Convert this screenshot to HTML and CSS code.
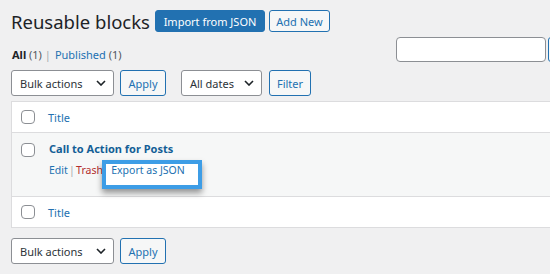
FILE: index.html
```html
<!DOCTYPE html>
<html lang="en">
<head>
<meta charset="UTF-8" />
<meta name="viewport" content="width=device-width, initial-scale=1" />
<title>Reusable blocks</title>
<link rel="stylesheet" href="styles.css">
</head>
<body>

<div class="wrap">
  <div class="page-head">
    <h1>Reusable blocks</h1>
    <a href="#" class="btn btn-primary">Import from JSON</a>
    <a href="#" class="btn btn-add">Add New</a>
  </div>

  <div class="filter-row">
    <ul class="subsubsub">
      <li><a href="#" class="current">All <span class="count">(1)</span></a> <span class="sep">|</span></li>
      <li><a href="#">Published <span class="count">(1)</span></a></li>
    </ul>
    <div class="search-box">
      <input type="search" class="search-input" aria-label="Search">
      <span class="search-btn"></span>
    </div>
  </div>

  <div class="tablenav">
    <div class="select select-bulk">Bulk actions
      <svg viewBox="0 0 10 6" width="10" height="6"><path d="M1 1l4 4 4-4" fill="none" stroke="#1d2327" stroke-width="1.6"/></svg>
    </div>
    <a href="#" class="btn btn-small">Apply</a>
    <div class="select select-dates">All dates
      <svg viewBox="0 0 10 6" width="10" height="6"><path d="M1 1l4 4 4-4" fill="none" stroke="#1d2327" stroke-width="1.6"/></svg>
    </div>
    <a href="#" class="btn btn-small">Filter</a>
  </div>

  <div class="list-table">
    <div class="row row-head">
      <span class="check"></span>
      <a href="#" class="col-title">Title</a>
    </div>
    <div class="row row-item">
      <span class="check"></span>
      <div class="item-body">
        <a href="#" class="item-title">Call to Action for Posts</a>
        <div class="row-actions">
          <a href="#">Edit</a> <span class="sep">|</span>
          <a href="#" class="trash">Trash</a> <span class="sep">|</span>
          <span class="export">
            <a href="#">Export as JSON</a>
            <span class="highlight"></span>
          </span>
        </div>
      </div>
    </div>
    <div class="row row-head">
      <span class="check"></span>
      <a href="#" class="col-title">Title</a>
    </div>
  </div>

  <div class="tablenav tablenav-bottom">
    <div class="select select-bulk">Bulk actions
      <svg viewBox="0 0 10 6" width="10" height="6"><path d="M1 1l4 4 4-4" fill="none" stroke="#1d2327" stroke-width="1.6"/></svg>
    </div>
    <a href="#" class="btn btn-small">Apply</a>
  </div>
</div>

</body>
</html>
```

FILE: styles.css
```css
/* Basic Reset */
* {
  margin: 0; padding: 0; box-sizing: border-box;
}
html, body {
  overflow: hidden;
}
body {
  font-family: "Noto Sans", "Open Sans", sans-serif;
  background: #f0f0f1;
  color: #1d2327;
  font-size: 11px;
}
a {
  color: #2271b1;
  text-decoration: none;
}
.wrap {
  width: 700px;
  padding: 8px 0 0 11px;
}
/* Heading + page buttons */
.page-head {
  display: flex;
  align-items: center;
  height: 26px;
}
h1 {
  font-size: 18.5px;
  font-weight: 400;
  color: #1d2327;
  margin-right: 5px;
  white-space: nowrap;
}
.btn {
  display: inline-flex;
  align-items: center;
  justify-content: center;
  height: 22px;
  border: 1px solid #2271b1;
  border-radius: 3px;
  background: #f6f7f7;
  color: #2271b1;
  white-space: nowrap;
  flex: none;
}
.btn-primary {
  background: #2271b1;
  color: #fff;
  width: 110px;
}
.btn-add {
  width: 61px;
  margin-left: 4px;
}
/* Status links + search */
.filter-row {
  display: grid;
  grid-template-columns: 385px auto;
  margin-top: 3px;
}
.subsubsub {
  list-style: none;
  display: flex;
  gap: 4px;
  align-self: end;
  padding-left: 1px;
  color: #50575e;
}
.subsubsub .current {
  color: #1d2327;
  font-weight: 700;
}
.subsubsub .count {
  font-weight: 400;
  color: #50575e;
}
.sep {
  color: #a7aaad;
}
.search-box {
  display: flex;
  gap: 2px;
}
.search-input {
  width: 150px;
  height: 25px;
  border: 1px solid #8c8f94;
  border-radius: 4px;
  background: #fff;
}
.search-btn {
  width: 60px;
  height: 25px;
  border: 1px solid #2271b1;
  border-radius: 3px;
  background: #f6f7f7;
}
/* Table nav */
.tablenav {
  display: flex;
  align-items: center;
  margin-top: 8px;
  height: 26px;
}
.select {
  display: flex;
  align-items: center;
  justify-content: space-between;
  height: 26px;
  padding: 0 7px 0 8px;
  border: 1px solid #8c8f94;
  border-radius: 3px;
  background: #fff;
  color: #2c3338;
}
.select-bulk {
  width: 103px;
}
.select-dates {
  width: 81px;
  margin-left: 15px;
}
.btn-small {
  height: 26px;
  margin-left: 6px;
  width: 46px;
}
.select-dates + .btn-small {
  margin-left: 7px;
  width: 42px;
}
/* List table */
.list-table {
  margin-top: 5px;
  border: 1px solid #dcdcde;
  background: #fff;
}
.row {
  display: flex;
  padding-left: 9px;
}
.row-head {
  align-items: center;
  height: 30px;
}
.row-item {
  height: 65px;
  background: #f6f7f7;
  border-top: 1px solid #dcdcde;
  border-bottom: 1px solid #dcdcde;
  padding-top: 7px;
}
.check {
  width: 14px;
  height: 14px;
  border: 1px solid #8c8f94;
  border-radius: 4px;
  background: #fff;
  margin-right: 13px;
  flex: none;
}
.row-item .check {
  margin-top: 3px;
}
.col-title {
  font-size: 11px;
}
.item-body {
  padding-left: 1px;
}
.item-title {
  display: block;
  font-size: 11px;
  font-weight: 700;
  color: #135e96;
  line-height: 18px;
}
.row-actions {
  margin-top: 5px;
  font-size: 10.5px;
  word-spacing: -1.5px;
}
.row-actions .trash {
  color: #b32d2e;
}
/* Callout box drawn over the row action */
.export {
  position: relative;
  z-index: 0;
  word-spacing: 0;
}
.highlight {
  position: absolute;
  left: -9px;
  top: -3px;
  width: 100px;
  height: 29px;
  border: 4px solid #3d9de6;
  box-shadow: 0 4px 6px rgba(0, 0, 0, 0.4);
  z-index: -1;
  background: #fff;
}
.tablenav-bottom {
  margin-top: 10px;
}
```
